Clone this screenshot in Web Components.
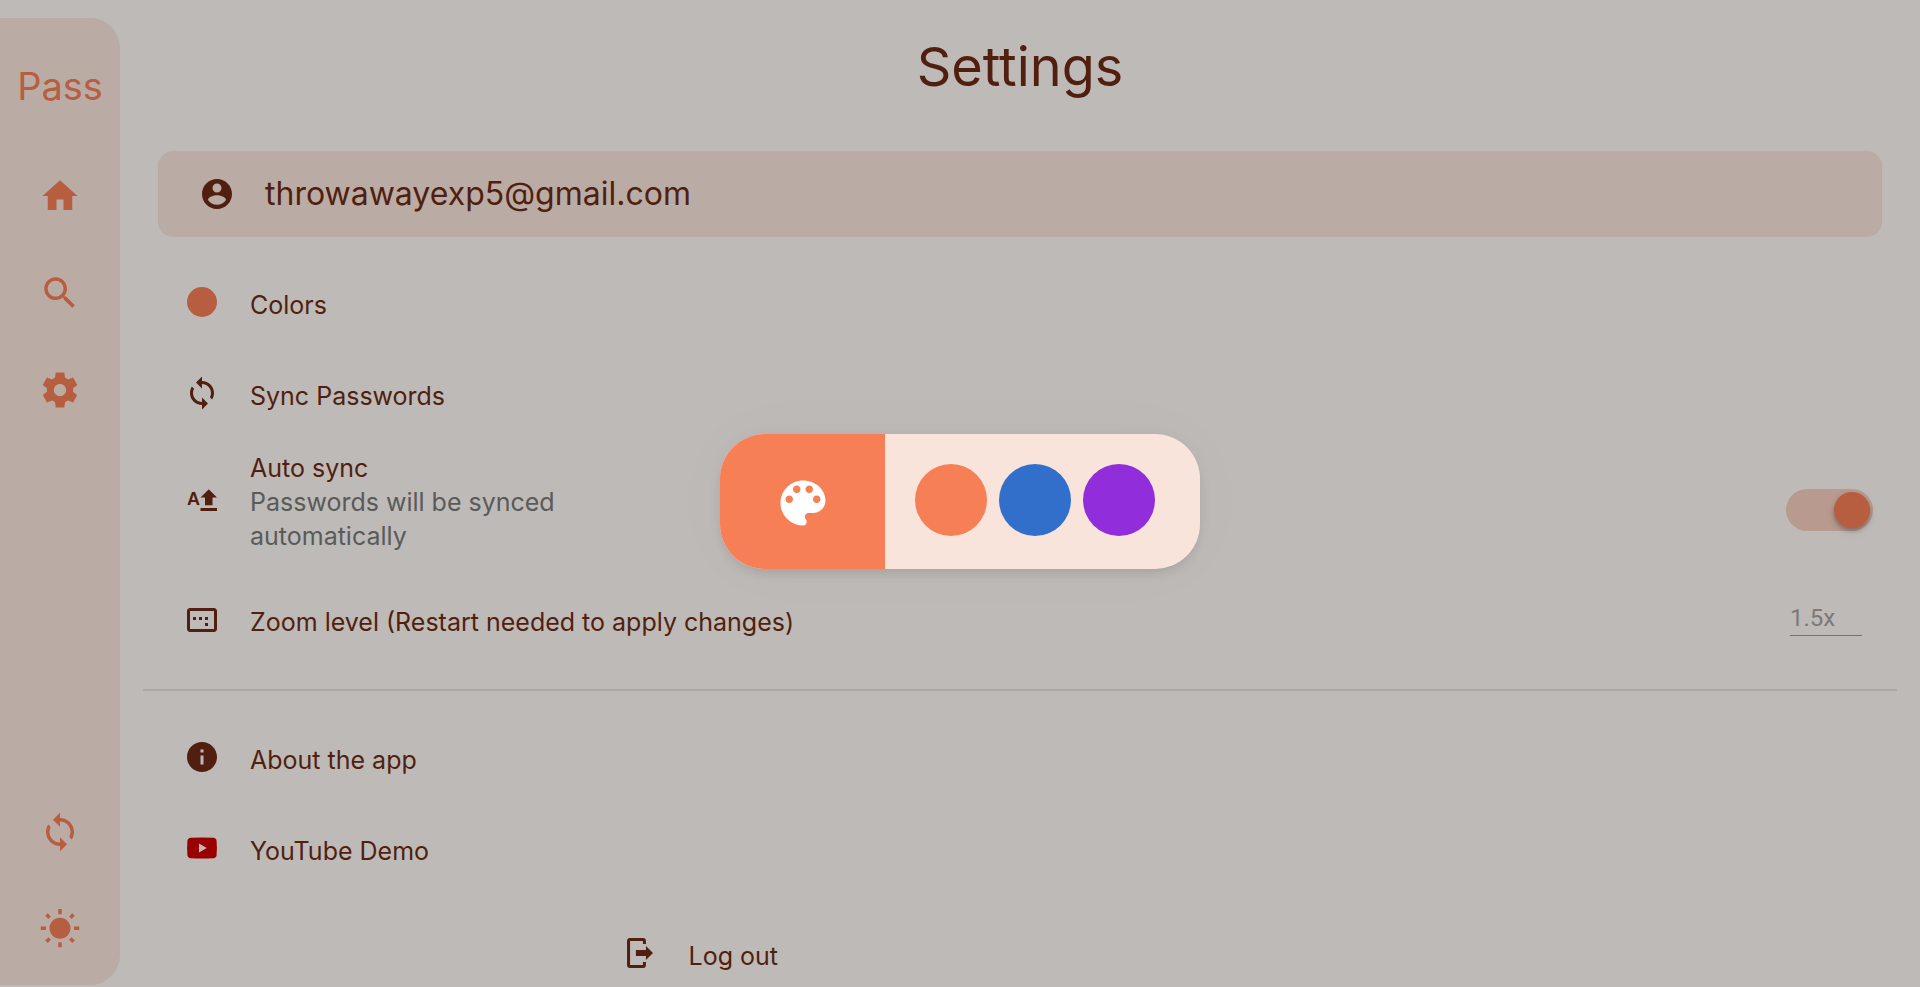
<!DOCTYPE html>
<html lang="en">
<head>
<meta charset="utf-8">
<meta name="viewport" content="width=device-width, initial-scale=1">
<title>Pass - Settings</title>
<style>
:root {
  --surface: #bebab7;
  --panel: #baaba4;
  --primary: #b75e41;
  --ink: #511f0f;
  --muted: #5a5a5a;
}
body {
  margin: 0;
  background: var(--surface);
  color: var(--ink);
  font-family: Inter, "Open Sans", sans-serif;
  font-size: 25px;
  line-height: 34px;
}
</style>
</head>
<body>
<pass-app></pass-app>
<script>
const ICONS = {
  home: '<path d="M10 20v-6h4v6h5v-8h3L12 3 2 12h3v8z"/>',
  search: '<path d="M15.5 14h-.79l-.28-.27C15.41 12.59 16 11.11 16 9.5 16 5.91 13.09 3 9.5 3S3 5.91 3 9.5 5.91 16 9.5 16c1.61 0 3.09-.59 4.23-1.57l.27.28v.79l5 4.99L20.49 19l-4.99-5zm-6 0C7.01 14 5 11.99 5 9.5S7.01 5 9.5 5 14 7.01 14 9.5 11.99 14 9.5 14z"/>',
  settings: '<path d="M19.44 12.99l-.01.02c.04-.33.08-.67.08-1.01 0-.34-.03-.66-.07-.99l.01.02 2.44-1.92-2.43-4.22-2.87 1.16.01.01c-.52-.4-1.09-.74-1.71-1h.01L14.44 2H9.57l-.44 3.07h.01c-.62.26-1.19.6-1.71 1l.01-.01-2.88-1.17-2.44 4.22 2.44 1.92.01-.02c-.04.33-.07.65-.07.99 0 .34.03.68.08 1.01l-.01-.02-2.1 1.65-.33.26 2.43 4.2 2.88-1.15-.02-.04c.53.41 1.1.75 1.73 1.01h-.03L9.58 22h4.85s.03-.18.06-.42l.38-2.65h-.01c.62-.26 1.2-.6 1.73-1.01l-.02.04 2.88 1.15 2.43-4.2s-.14-.12-.33-.26l-2.11-1.66zM12 15.5c-1.93 0-3.5-1.57-3.5-3.5s1.57-3.5 3.5-3.5 3.5 1.57 3.5 3.5-1.57 3.5-3.5 3.5z"/>',
  sync: '<path d="M12 4V1L8 5l4 4V6c3.31 0 6 2.69 6 6 0 1.01-.25 1.97-.7 2.8l1.46 1.46C19.54 15.03 20 13.57 20 12c0-4.42-3.58-8-8-8zm0 14c-3.31 0-6-2.69-6-6 0-1.01.25-1.97.7-2.8L5.24 7.74C4.46 8.97 4 10.43 4 12c0 4.42 3.58 8 8 8v3l4-4-4-4v3z"/>',
  sunny: '<path d="M6.76 4.84l-1.8-1.79-1.41 1.41 1.79 1.79 1.42-1.41zM4 10.5H1v2h3v-2zm9-9.95h-2V3.5h2V.55zm7.45 3.91l-1.41-1.41-1.79 1.79 1.41 1.41 1.79-1.79zm-3.21 13.7l1.79 1.8 1.41-1.41-1.8-1.79-1.4 1.4zM20 10.5v2h3v-2h-3zm-8-5c-3.31 0-6 2.69-6 6s2.69 6 6 6 6-2.69 6-6-2.69-6-6-6zm-1 16.95h2V19.5h-2v2.95zm-7.45-3.91l1.41 1.41 1.79-1.8-1.41-1.41-1.79 1.8z"/>',
  account: '<path d="M12 2C6.48 2 2 6.48 2 12s4.48 10 10 10 10-4.48 10-10S17.52 2 12 2zm0 3c1.66 0 3 1.34 3 3s-1.34 3-3 3-3-1.34-3-3 1.34-3 3-3zm0 14.2c-2.5 0-4.71-1.28-6-3.22.03-1.99 4-3.08 6-3.08 1.99 0 5.97 1.09 6 3.08-1.29 1.94-3.5 3.22-6 3.22z"/>',
  circle: '<circle cx="12" cy="12" r="10"/>',
  auto: '<text x="2" y="14" font-family="Liberation Sans, sans-serif" font-weight="700" font-size="12">A</text><path d="M16.5 3.5L11 9h3v5.2h5V9h3zM11 16h11v2H11z"/>',
  aspect: '<path d="M16 10h-2v2h2v-2zm0 4h-2v2h2v-2zm-8-4H6v2h2v-2zm4 0h-2v2h2v-2zm8-6H4c-1.1 0-2 .9-2 2v12c0 1.1.9 2 2 2h16c1.1 0 2-.9 2-2V6c0-1.1-.9-2-2-2zm0 14H4V6h16v12z"/>',
  info: '<path d="M12 2C6.48 2 2 6.48 2 12s4.48 10 10 10 10-4.48 10-10S17.52 2 12 2zm1 15h-2v-6h2v6zm0-8h-2V7h2v2z"/>',
  youtube: '<path fill="#900" d="M4.5 5.2Q12 4.8 19.5 5.2Q21.5 5.4 21.7 7.2Q22.2 12 21.7 16.8Q21.5 18.6 19.5 18.8Q12 19.2 4.5 18.8Q2.5 18.6 2.3 16.8Q1.8 12 2.3 7.2Q2.5 5.4 4.5 5.2z"/><path fill="#bebab7" d="M10 9v6l5.2-3z"/>',
  logout: '<path d="M4.7 2h8.6a2 2 0 0 1 2 2v2h-2V4H4.7v16h8.6v-2h2v2a2 2 0 0 1-2 2H4.7a2 2 0 0 1-2-2V4a2 2 0 0 1 2-2zM8.600 10h6.7V7.3L20 12l-4.7 4.7V14H8.600z"/>',
  palette: '<path d="M12 3c-4.97 0-9 4.03-9 9s4.03 9 9 9c.83 0 1.5-.67 1.5-1.5 0-.39-.15-.74-.39-1.01-.23-.26-.38-.61-.38-.99 0-.83.67-1.5 1.5-1.5H16c2.76 0 5-2.24 5-5 0-4.42-4.03-8-9-8zm-5.500 9c-.83 0-1.5-.67-1.5-1.5S5.67 9 6.5 9 8 9.67 8 10.5 7.33 12 6.5 12zm3-4C8.670 8 8 7.33 8 6.5S8.670 5 9.5 5s1.5.67 1.5 1.5S10.33 8 9.5 8zm5 0c-.83 0-1.5-.67-1.5-1.5S13.67 5 14.5 5s1.5.67 1.5 1.5S15.33 8 14.5 8zm3 4c-.83 0-1.5-.67-1.5-1.5S16.67 9 17.5 9s1.5.67 1.5 1.5-.67 1.5-1.5 1.5z"/>'
};

function define(name, render) {
  customElements.define(name, class extends HTMLElement {
    constructor() {
      super();
      this.attachShadow({ mode: 'open' });
    }
    connectedCallback() {
      const template = document.createElement('template');
      template.innerHTML = render(this);
      this.shadowRoot.replaceChildren(template.content.cloneNode(true));
    }
  });
}

define('pass-icon', el => `
<style>
:host { display: block; flex: none; width: var(--icon-size, 36px); height: var(--icon-size, 36px); }
svg { display: block; width: 100%; height: 100%; fill: currentColor; }
</style>
<svg viewBox="0 0 24 24" aria-hidden="true">${ICONS[el.getAttribute('name')]}</svg>`);

define('nav-button', el => `
<style>
:host { display: block; --icon-size: 42px; }
button { display: block; padding: 0; border: 0; background: none; color: inherit; cursor: pointer; }
</style>
<button type="button" aria-label="${el.getAttribute('label')}"><pass-icon name="${el.getAttribute('icon')}"></pass-icon></button>`);

define('side-bar', () => `
<style>
:host {
  display: flex; flex-direction: column; align-items: center; box-sizing: border-box;
  flex: none; width: 120px; margin: 18px 0 2px; padding: 43px 0 35px;
  border-radius: 0 30px 30px 0; background: var(--panel); color: var(--primary);
}
.brand { font-size: 38px; line-height: 50px; margin-bottom: 64px; }
nav, .tools { display: flex; flex-direction: column; gap: 55px; }
.tools { margin-top: auto; }
</style>
<div class="brand">Pass</div>
<nav aria-label="Main">
  <nav-button icon="home" label="Home"></nav-button>
  <nav-button icon="search" label="Search"></nav-button>
  <nav-button icon="settings" label="Settings"></nav-button>
</nav>
<div class="tools">
  <nav-button icon="sync" label="Sync"></nav-button>
  <nav-button icon="sunny" label="Toggle theme"></nav-button>
</div>`);

define('account-card', () => `
<style>
:host {
  display: flex; align-items: center; gap: 30px; box-sizing: border-box; height: 86px;
  margin: 0 15px; padding: 0 41px; border-radius: 15px; background: var(--panel);
  font-size: 32px; line-height: 42px;
}
</style>
<pass-icon name="account"></pass-icon><slot></slot>`);

define('setting-row', el => {
  const href = el.getAttribute('href');
  const tag = href ? 'a' : 'button';
  const attrs = href ? `href="${href}"` : 'type="button"';
  return `
<style>
:host { display: block; }
.row {
  display: flex; align-items: center; gap: 30px; box-sizing: border-box; width: 100%;
  height: var(--row-height, 91px); padding: 0 41px; border: 0; background: none;
  color: inherit; font: inherit; text-align: left; text-decoration: none; cursor: pointer;
}
.text { padding-top: 6px; }
</style>
<${tag} class="row" ${attrs}><pass-icon name="${el.getAttribute('icon')}" style="color:${el.getAttribute('tint') || 'inherit'}"></pass-icon><span class="text"><slot></slot></span></${tag}>`;
});

define('auto-sync-row', () => `
<style>
:host { display: flex; align-items: center; gap: 30px; height: 128px; padding: 0 24px 0 41px; }
label { max-width: 320px; cursor: pointer; }
small { display: block; font-size: inherit; color: var(--muted); }
input {
  appearance: none; display: flex; align-items: center; justify-content: flex-end; box-sizing: border-box;
  width: 87px; height: 42px; margin: 16px 0 0 auto; padding: 0 3px; border-radius: 21px;
  background: #b99a8e; cursor: pointer;
}
input::before {
  content: ""; width: 36px; height: 36px; border-radius: 50%; background: var(--primary);
  box-shadow: 0 3px 4px rgba(0, 0, 0, .25), 0 4px 12px rgba(0, 0, 0, .06);
}
input:not(:checked) { justify-content: flex-start; }
</style>
<pass-icon name="auto"></pass-icon>
<label for="auto">Auto sync<small>Passwords will be synced automatically</small></label>
<input id="auto" type="checkbox" role="switch" checked>`);

define('zoom-row', () => `
<style>
:host { display: flex; align-items: center; gap: 30px; height: 108px; padding: 0 35px 0 41px; }
label { padding-top: 4px; }
input {
  box-sizing: border-box; width: 72px; height: 34px; margin: 0 0 2px auto; padding: 0 0 2px; border: 0;
  border-bottom: 1px solid #75716f; border-radius: 0; outline: 0; background: none; color: #7d7976;
  font: 24px/30px Roboto, sans-serif;
}
</style>
<pass-icon name="aspect"></pass-icon>
<label for="zoom">Zoom level (Restart needed to apply changes)</label>
<input id="zoom" type="text" value="1.5x">`);

define('settings-page', () => `
<style>
:host { display: block; flex: 1; min-width: 0; padding: 0 23px; }
h1 { margin: 0; padding: 32px 0 49px; font-size: 54px; line-height: 70px; font-weight: 400; text-align: center; }
.group { margin-top: 19px; }
hr { height: 2px; margin: 15px 0 20px; border: 0; background: #aca8a5; }
.exit { width: 260px; margin: 28px 0 0 25%; --row-height: 64px; }
</style>
<h1>Settings</h1>
<account-card>throwawayexp5@gmail.com</account-card>
<div class="group">
  <setting-row icon="circle" tint="var(--primary)">Colors</setting-row>
  <setting-row icon="sync">Sync Passwords</setting-row>
  <auto-sync-row></auto-sync-row>
  <zoom-row></zoom-row>
</div>
<hr>
<setting-row icon="info">About the app</setting-row>
<setting-row icon="youtube" href="#demo">YouTube Demo</setting-row>
<setting-row class="exit" icon="logout">Log out</setting-row>`);

define('color-picker', () => `
<style>
:host { position: fixed; inset: 0; display: grid; place-items: center; padding-top: 16px; box-sizing: border-box; }
section {
  display: flex; width: 480px; height: 135px; border-radius: 45px; overflow: hidden; background: #f8e4db;
  box-shadow: 0 8px 15px -5px rgba(0, 0, 0, .12), 0 0 20px rgba(0, 0, 0, .05), 0 0 70px 10px rgba(0, 0, 0, .015);
}
.mark { display: grid; place-items: center; box-sizing: border-box; width: 165px; padding-top: 2px; background: #f67f56; color: #fff; --icon-size: 60px; }
.swatches { display: flex; gap: 12px; padding: 30px; }
button { width: 72px; height: 72px; padding: 0; border: 0; border-radius: 50%; cursor: pointer; }
.orange { background: #f67f56; }
.blue { background: #326fcb; }
.purple { background: #912ddb; }
</style>
<section role="dialog" aria-label="Pick a color">
  <div class="mark"><pass-icon name="palette"></pass-icon></div>
  <div class="swatches">
    <button class="orange" type="button" aria-label="Orange"></button>
    <button class="blue" type="button" aria-label="Blue"></button>
    <button class="purple" type="button" aria-label="Purple"></button>
  </div>
</section>`);

define('pass-app', () => `
<style>
:host { display: flex; min-height: 100vh; overflow: hidden; }
</style>
<side-bar></side-bar>
<settings-page></settings-page>
<color-picker></color-picker>`);
</script>
</body>
</html>
